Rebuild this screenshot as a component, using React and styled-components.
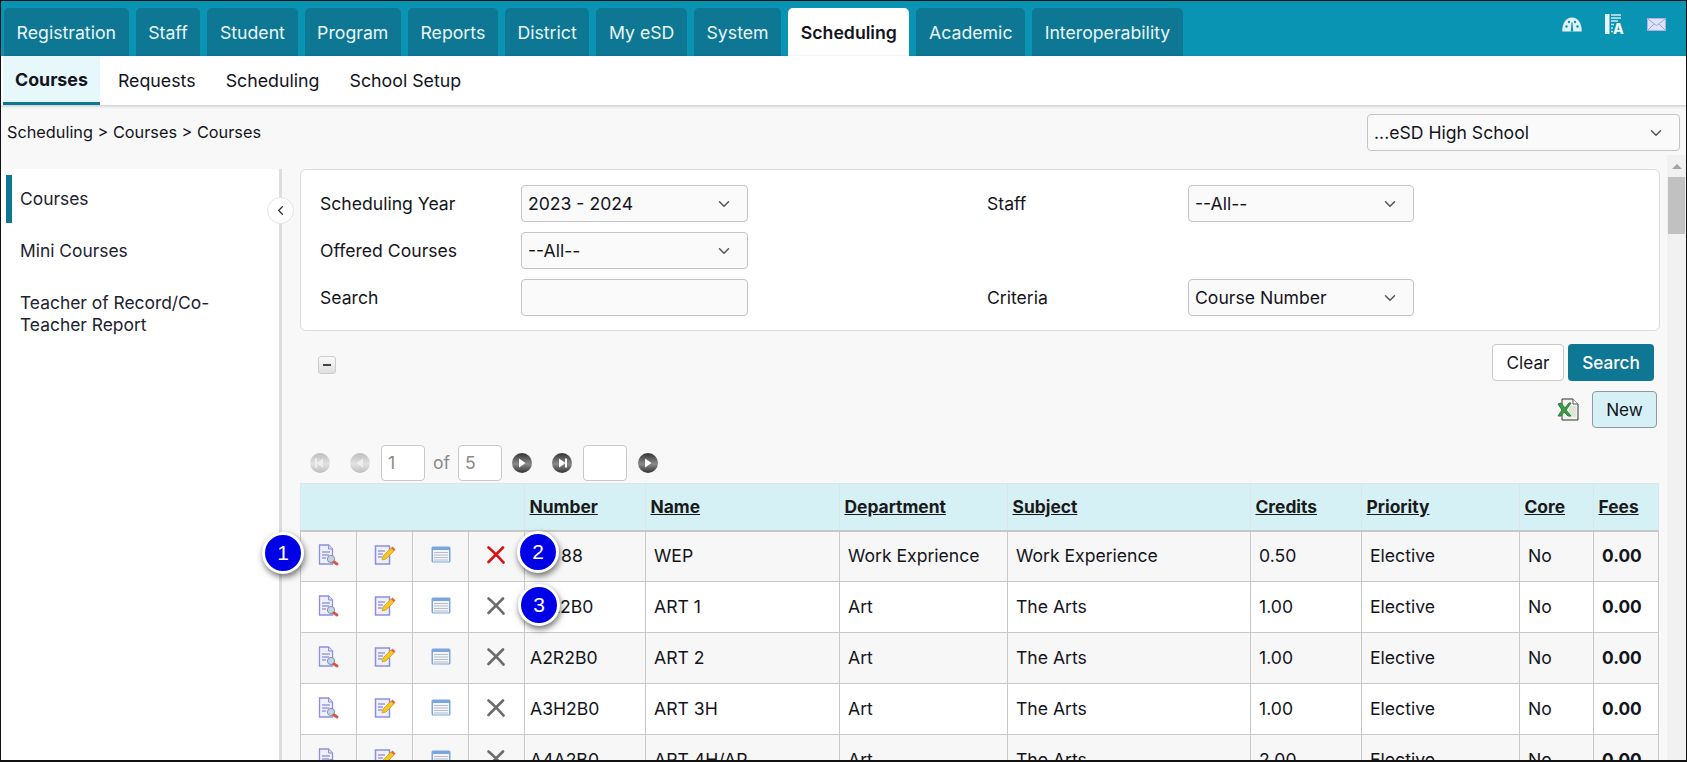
import React from 'react';
import styled, { createGlobalStyle } from 'styled-components';
import { ChevronDown, ChevronLeft } from 'lucide-react';

const GlobalStyle = createGlobalStyle`
  html, body { margin: 0; padding: 0; background: #f8f8f8; overflow: hidden; }
  * { box-sizing: border-box; }
  body { font-family: Inter, "Noto Sans", "Liberation Sans", sans-serif; color: #14141c; }
`;

const TABS = ['Registration', 'Staff', 'Student', 'Program', 'Reports', 'District', 'My eSD', 'System', 'Scheduling', 'Academic', 'Interoperability'];
const SUBTABS = ['Courses', 'Requests', 'Scheduling', 'School Setup'];
const COLUMNS = ['Number', 'Name', 'Department', 'Subject', 'Credits', 'Priority', 'Core', 'Fees'];
const ROWS = [
  { number: '', suffix: '88', name: 'WEP', dept: 'Work Exprience', subject: 'Work Experience', credits: '0.50', active: true },
  { number: 'A1R2B0', name: 'ART 1', dept: 'Art', subject: 'The Arts', credits: '1.00' },
  { number: 'A2R2B0', name: 'ART 2', dept: 'Art', subject: 'The Arts', credits: '1.00' },
  { number: 'A3H2B0', name: 'ART 3H', dept: 'Art', subject: 'The Arts', credits: '1.00' },
  { number: 'A4A2B0', name: 'ART 4H/AP', dept: 'Art', subject: 'The Arts', credits: '2.00' },
];

const ViewIcon = () => (
  <svg width="22" height="22" viewBox="0 0 22 22">
    <path d="M1.500 1h9l4 4v15h-13z" fill="#f0f0fd" stroke="#8d8ee0" strokeWidth="1.300" />
    <path d="M10.500 1v4h4" fill="#d5d6f6" stroke="#8d8ee0" />
    <path d="M4 8h8M4 11h7M4 14h4" stroke="#9a9be2" strokeWidth="1.300" />
    <circle cx="13" cy="15" r="3.600" fill="#c4d5e6" stroke="#7f93a8" />
    <path d="M16 18l3 2" stroke="#e0503c" strokeWidth="2.800" strokeLinecap="round" />
  </svg>
);

const EditIcon = () => (
  <svg width="22" height="22" viewBox="0 0 22 22">
    <path d="M1.500 2h14v18h-14z" fill="#f0f0fd" stroke="#8d8ee0" strokeWidth="1.500" />
    <path d="M4 7h7M4 10h5M4 13h4" stroke="#9a9be2" strokeWidth="1.300" />
    <path d="M8 16l1-4 8-8 3 3-8 8z" fill="#f4c820" stroke="#c69a14" strokeWidth="0.700" />
    <path d="M17 4l1.500-1.500 3 3-1.500 1.500z" fill="#e8643c" />
  </svg>
);

const ListIcon = () => (
  <svg width="20" height="18" viewBox="0 0 20 18">
    <rect x="0.500" y="0.500" width="19" height="16" rx="1.500" fill="#7ba6dc" />
    <rect x="2" y="4" width="16" height="11.500" fill="#f3f4f7" />
    <path d="M3 6.500h14M3 9h14M3 11.500h14M3 14h14" stroke="#b5bdcb" strokeWidth="1" />
  </svg>
);

const DeleteIcon = styled.svg`
  width: 18px;
  height: 18px;
  margin-right: 2px;
  color: ${(p) => (p.$active ? '#dc0f14' : '#6b6b6b')};
`;

const DeleteMark = ({ active }) => (
  <DeleteIcon $active={active} viewBox="0 0 18 18">
    <path d="M1.500 1.500C7 6 11 10.500 16.500 16.500M16 1.500C11 6.500 6.500 11 1.500 16" stroke="currentColor" strokeWidth="2.600" strokeLinecap="round" fill="none" />
  </DeleteIcon>
);

const PageButton = ({ kind, disabled, id }) => {
  const dark = disabled ? ['#e2e2e2', '#bdbdbd'] : ['#8a8a8a', '#333333'];
  const back = kind === 'first' || kind === 'prev';
  const bar = kind === 'first' || kind === 'last';
  return (
    <svg width="20" height="20" viewBox="0 0 20 20">
      <defs>
        <linearGradient id={id} x1="0" y1="0" x2="0" y2="1">
          <stop offset="0" stopColor={dark[1]} />
          <stop offset="0.55" stopColor={dark[0]} />
          <stop offset="1" stopColor={dark[1]} />
        </linearGradient>
      </defs>
      <circle cx="10" cy="10" r="10" fill={`url(#${id})`} />
      <path d={back ? 'M13 5.500v9L6.500 10z' : 'M7 5.500v9L13.500 10z'} fill={disabled ? '#efefef' : '#fff'} />
      {bar && <rect x={back ? 5 : 13} y="5.500" width="2" height="9" fill={disabled ? '#efefef' : '#fff'} />}
    </svg>
  );
};

const GaugeIcon = () => (
  <svg width="20" height="15" viewBox="0 0 20 15">
    <path d="M0.300 14.500C0 6.500 4 0.500 10 0.500s10 6 9.700 14z" fill="#dff1f5" />
    <g fill="#0a94b4">
      <circle cx="4.500" cy="9.500" r="1.200" />
      <circle cx="7" cy="5" r="1.200" />
      <circle cx="13" cy="5" r="1.200" />
      <circle cx="15.500" cy="9.500" r="1.200" />
      <path d="M8.800 14.500l.7-9h1l.7 9z" />
    </g>
  </svg>
);

const TranslateIcon = () => (
  <svg width="20" height="20" viewBox="0 0 20 20">
    <rect x="0" y="0" width="4.500" height="20" fill="#e6f4f8" />
    <path d="M6 1h10M6 4h10M6 7h7M6 10.500h3M6 14h2M6 17.500h2" stroke="#d4eaf0" strokeWidth="1.300" />
    <text x="8" y="20" fontFamily="Inter, sans-serif" fontWeight="800" fontSize="14" fill="#f1f9fb">A</text>
  </svg>
);

const MailIcon = () => (
  <svg width="19" height="13" viewBox="0 0 19 13">
    <rect x="0.500" y="0.500" width="18" height="12" fill="#dfe3fa" stroke="#aab0ea" />
    <path d="M1 1l8.500 6.500L18 1M1 12l6-6M18 12l-6-6" fill="none" stroke="#9aa2e6" />
  </svg>
);

const ExcelIcon = () => (
  <svg width="22" height="23" viewBox="0 0 22 23">
    <path d="M5 1h11l5 5v16H5z" fill="#f3f3ee" stroke="#333" />
    <path d="M16 1v5h5" fill="#fff" stroke="#555" />
    <rect x="12" y="8" width="7" height="11" fill="#dce8d6" />
    <path d="M1 6l3-1 4 5 4-5h2l-5 7 5 6h-3l-4-4-3 4H1l4-6z" fill="#3f9a49" stroke="#2e7d38" strokeWidth="1" />
  </svg>
);

export default function App() {
  return (
    <Frame>
      <GlobalStyle />
      <TopBar>
        <TabList>
          {TABS.map((tab) => (
            <Tab key={tab} $active={tab === 'Scheduling'}>{tab}</Tab>
          ))}
        </TabList>
        <TopIcons>
          <GaugeIcon />
          <TranslateIcon />
          <MailIcon />
        </TopIcons>
      </TopBar>

      <SubNav>
        {SUBTABS.map((tab) => (
          <SubTab key={tab} $active={tab === 'Courses'}>{tab}</SubTab>
        ))}
      </SubNav>

      <CrumbRow>
        <Crumbs>Scheduling &gt; Courses &gt; Courses</Crumbs>
        <SchoolSelect>
          ...eSD High School
          <ChevronDown size={18} color="#555" />
        </SchoolSelect>
      </CrumbRow>

      <Workspace>
        <Sidebar>
          <SideItem $active>Courses</SideItem>
          <SideItem>Mini Courses</SideItem>
          <SideItem>Teacher of Record/Co-Teacher Report</SideItem>
          <CollapseButton><ChevronLeft size={15} color="#333" /></CollapseButton>
        </Sidebar>

        <Main>
          <FilterPanel>
            <FieldLabel>Scheduling Year</FieldLabel>
            <SelectBox>2023 - 2024<ChevronDown size={18} color="#555" /></SelectBox>
            <span />
            <FieldLabel>Staff</FieldLabel>
            <SelectBox>--All--<ChevronDown size={18} color="#555" /></SelectBox>

            <FieldLabel>Offered Courses</FieldLabel>
            <SelectBox>--All--<ChevronDown size={18} color="#555" /></SelectBox>
            <span />
            <span />
            <span />

            <FieldLabel>Search</FieldLabel>
            <SelectBox />
            <span />
            <FieldLabel>Criteria</FieldLabel>
            <SelectBox>Course Number<ChevronDown size={18} color="#555" /></SelectBox>
          </FilterPanel>

          <ActionRow>
            <MinusButton />
            <ActionButtons>
              <ClearButton>Clear</ClearButton>
              <SearchButton>Search</SearchButton>
            </ActionButtons>
          </ActionRow>

          <NewRow>
            <ExcelIcon />
            <NewButton>New</NewButton>
          </NewRow>

          <Pager>
            <PageButton kind="first" disabled id="pg1" />
            <PageButton kind="prev" disabled id="pg2" />
            <PageInput>1</PageInput>
            <PageOf>of</PageOf>
            <PageInput>5</PageInput>
            <PageButton kind="next" id="pg3" />
            <PageButton kind="last" id="pg4" />
            <PageInput />
            <PageButton kind="next" id="pg5" />
          </Pager>

          <TableWrap>
            <CourseTable>
              <colgroup>
                {[56, 56, 56, 56, 121, 194, 168, 243, 111, 158, 74, 65].map((w, i) => (
                  <col key={i} width={w} />
                ))}
              </colgroup>
              <thead>
                <tr>
                  <HeadCell colSpan={4} />
                  {COLUMNS.map((col) => (
                    <HeadCell key={col}><u>{col}</u></HeadCell>
                  ))}
                </tr>
              </thead>
              <tbody>
                {ROWS.map((row, i) => (
                  <CourseRow key={row.name} $odd={i % 2 === 0}>
                    <IconCell><ViewIcon /></IconCell>
                    <IconCell><EditIcon /></IconCell>
                    <IconCell><ListIcon /></IconCell>
                    <IconCell><DeleteMark active={row.active} /></IconCell>
                    <NumberCell>{row.number || <NumberTail>{row.suffix}</NumberTail>}</NumberCell>
                    <TextCell>{row.name}</TextCell>
                    <TextCell>{row.dept}</TextCell>
                    <TextCell>{row.subject}</TextCell>
                    <TextCell>{row.credits}</TextCell>
                    <TextCell>Elective</TextCell>
                    <TextCell>No</TextCell>
                    <TextCell><Fee>0.00</Fee></TextCell>
                  </CourseRow>
                ))}
              </tbody>
            </CourseTable>
            <Callout $left={-38} $top={49}>1</Callout>
            <Callout $left={217} $top={48}>2</Callout>
            <Callout $left={218} $top={101}>3</Callout>
          </TableWrap>
        </Main>

        <ScrollTrack>
          <ScrollArrow />
          <ScrollThumb />
        </ScrollTrack>
      </Workspace>
    </Frame>
  );
}

const Frame = styled.div`
  width: 1687px;
  height: 762px;
  border: 1px solid #111;
  border-bottom-width: 2px;
  display: flex;
  flex-direction: column;
  overflow: hidden;
  background: #f8f8f8;
  font-size: 17.6px;
`;

const TopBar = styled.header`
  flex: 0 0 55px;
  display: flex;
  justify-content: space-between;
  background: #0a94b4;
  padding: 7px 20px 0 3px;
`;

const TabList = styled.nav`
  display: flex;
  gap: 7px;
`;

const Tab = styled.div`
  display: flex;
  align-items: center;
  padding: 0 12.6px;
  border-radius: 5px 5px 0 0;
  font-size: 17.7px;
  background: ${(p) => (p.$active ? '#fff' : '#0e7794')};
  color: ${(p) => (p.$active ? '#14141c' : '#e9f6f9')};
  font-weight: ${(p) => (p.$active ? 600 : 400)};
`;

const TopIcons = styled.div`
  display: flex;
  align-items: center;
  gap: 22.500px;
  height: 20px;
  margin-top: 6px;
`;

const SubNav = styled.nav`
  flex: 0 0 49px;
  display: flex;
  padding-left: 2px;
  background: #fff;
  box-shadow: 0 1px 3px rgba(0, 0, 0, 0.22);
  position: relative;
`;

const SubTab = styled.div`
  display: flex;
  align-items: center;
  padding: 0 ${(p) => (p.$active ? '12px' : '15px')};
  margin-right: ${(p) => (p.$active ? '3px' : '0')};
  height: 49px;
  font-size: 17.8px;
  font-weight: ${(p) => (p.$active ? 700 : 400)};
  background: ${(p) => (p.$active ? '#e6f8fb' : 'transparent')};
  border-bottom: ${(p) => (p.$active ? '3px solid #0e7794' : 'none')};
`;

const CrumbRow = styled.div`
  flex: 0 0 50px;
  display: flex;
  justify-content: space-between;
  align-items: flex-start;
  padding: 9px 6px 0 6px;
`;

const Crumbs = styled.div`
  font-size: 16.3px;
  line-height: 37px;
`;

const SelectBox = styled.div`
  height: 37px;
  display: flex;
  align-items: center;
  justify-content: space-between;
  padding: 0 14px 0 6px;
  background: #fafafa;
  border: 1px solid #c4c4c4;
  border-radius: 4px;
`;

const SchoolSelect = styled(SelectBox)`
  width: 313px;
`;

const Workspace = styled.div`
  flex: 1;
  min-height: 0;
  display: flex;
`;

const Sidebar = styled.aside`
  position: relative;
  flex: 0 0 281px;
  margin-top: 14px;
  padding-top: 6px;
  background: #fff;
  border-right: 3px solid #ddd;
`;

const SideItem = styled.div`
  margin-bottom: 4px;
  padding: 13px 30px 13px ${(p) => (p.$active ? '8px' : '19px')};
  margin-left: ${(p) => (p.$active ? '5px' : '0')};
  border-left: ${(p) => (p.$active ? '6px solid #0e7794' : 'none')};
  font-size: 17.4px;
  line-height: 22px;
  color: #222230;
`;

const CollapseButton = styled.div`
  position: absolute;
  right: -15px;
  top: 28px;
  width: 27px;
  height: 27px;
  border-radius: 50%;
  display: flex;
  align-items: center;
  justify-content: center;
  background: #fff;
  border: 1px solid #e4e4e4;
`;

const Main = styled.main`
  flex: 1;
  min-width: 0;
  padding: 14px 7px 0 18px;
`;

const FilterPanel = styled.section`
  display: grid;
  grid-template-columns: 201px 227px 239px 201px 226px;
  grid-auto-rows: 37px;
  row-gap: 10px;
  align-items: center;
  height: 162px;
  padding: 15px 18px 15px 19px;
  background: #fff;
  border: 1px solid #dcdcdc;
  border-radius: 6px;
`;

const FieldLabel = styled.label`
  color: #14141c;
`;

const ActionRow = styled.div`
  display: flex;
  justify-content: space-between;
  margin-top: 13px;
  padding: 0 6px 0 18px;
`;

const MinusButton = styled.div`
  position: relative;
  width: 18px;
  height: 18px;
  margin-top: 12px;
  border: 1px solid #ccc;
  border-radius: 3px;
  background: linear-gradient(#fafafa, #dedede);

  &::after {
    content: '';
    position: absolute;
    left: 4px;
    top: 7px;
    width: 8px;
    height: 2px;
    background: #444;
  }
`;

const ActionButtons = styled.div`
  display: flex;
  gap: 4px;
`;

const BaseButton = styled.button`
  height: 37px;
  font: inherit;
  font-size: 17.2px;
  border-radius: 4px;
  cursor: pointer;
`;

const ClearButton = styled(BaseButton)`
  width: 72px;
  background: #fff;
  color: #14141c;
  border: 1px solid #c8c8c8;
`;

const SearchButton = styled(BaseButton)`
  width: 86px;
  background: #0e7794;
  color: #fff;
  font-weight: 500;
  border: none;
`;

const NewRow = styled.div`
  display: flex;
  justify-content: flex-end;
  align-items: center;
  gap: 13px;
  margin-top: 10px;
  padding-right: 3px;
`;

const NewButton = styled(BaseButton)`
  width: 65px;
  background: #d6f1f6;
  color: #14141c;
  border: 1px solid #8f9a9d;
`;

const Pager = styled.div`
  display: flex;
  align-items: center;
  gap: 11px;
  height: 37px;
  margin-top: 16px;
  padding-left: 10px;

  & > svg:nth-child(2) { margin-left: 9px; }
  & > svg:nth-child(6) { margin-left: -1px; }
  & > svg:nth-child(7) { margin-left: 9px; }
`;

const PageInput = styled.div`
  width: 44px;
  height: 36px;
  display: flex;
  align-items: center;
  padding-left: 6px;
  color: #8a8a8a;
  background: #fff;
  border: 1px solid #c8c8c8;
  border-radius: 4px;
`;

const PageOf = styled.span`
  color: #8a8a8a;
  margin: 0 -3px;
`;

const TableWrap = styled.div`
  position: relative;
  margin-top: 2px;
`;

const CourseTable = styled.table`
  width: 1358px;
  table-layout: fixed;
  border-collapse: collapse;
  border: 1px solid #c8c8c8;
`;

const HeadCell = styled.th`
  height: 47px;
  padding: 0 4px 0 4.500px;
  text-align: left;
  font-size: 17.4px;
  font-weight: 700;
  background: #d6f1f6;
  border: 1px solid #dbe6e8;
  border-bottom: 2px solid #c8c8c8;
  color: #1a1a1a;
`;

const CourseRow = styled.tr`
  height: 51px;
  background: ${(p) => (p.$odd ? '#f7f7f7' : '#fff')};
`;

const IconCell = styled.td`
  text-align: center;
  vertical-align: middle;
  border: 1px solid #c8c8c8;
  padding-top: 3px;
`;

const TextCell = styled.td`
  padding: 0 8px 1px;
  border: 1px solid #c8c8c8;
  color: #14141c;
  white-space: nowrap;
`;

const NumberCell = styled(TextCell)`
  padding-left: 5px;
`;

const NumberTail = styled.span`
  padding-left: 31px;
`;

const Fee = styled.b`
  font-size: 17.3px;
`;

const Callout = styled.div`
  position: absolute;
  z-index: 2;
  left: ${(p) => p.$left}px;
  top: ${(p) => p.$top}px;
  width: 42px;
  height: 42px;
  display: flex;
  align-items: center;
  justify-content: center;
  border-radius: 50%;
  border: 3px solid #fff;
  background: #0000e6;
  color: #fff;
  font-size: 21px;
  font-family: "Liberation Sans", sans-serif;
  box-shadow: 1px 3px 6px rgba(0, 0, 0, 0.55);
`;

const ScrollTrack = styled.div`
  flex: 0 0 19px;
  background: #f1f1f1;
  padding: 0 1px;
`;

const ScrollArrow = styled.div`
  width: 0;
  height: 0;
  margin: 9px auto 0;
  border-left: 5px solid transparent;
  border-right: 5px solid transparent;
  border-bottom: 5px solid #a3a3a3;
`;

const ScrollThumb = styled.div`
  height: 57px;
  margin-top: 8px;
  background: #c1c1c1;
`;
